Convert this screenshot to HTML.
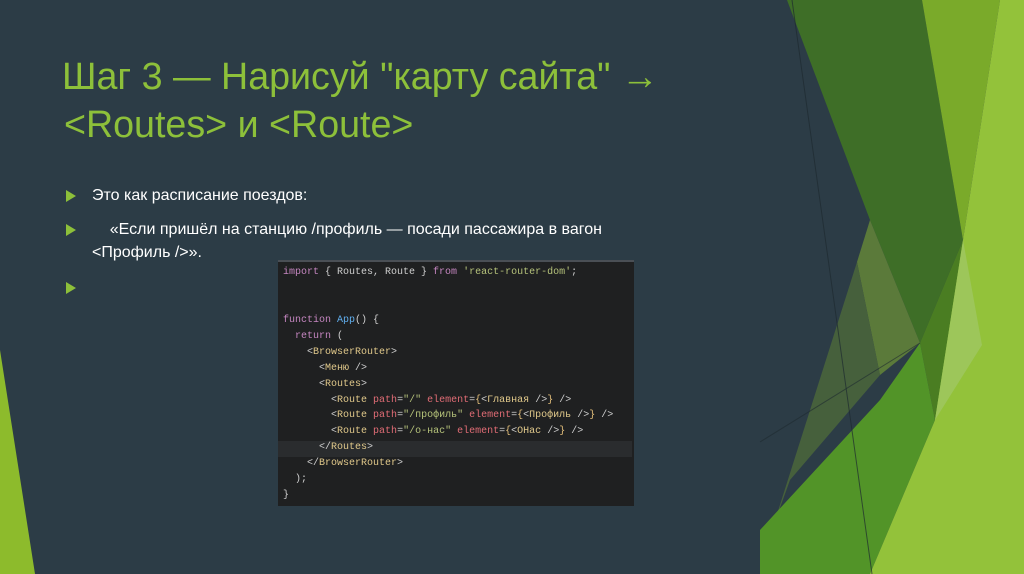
<!DOCTYPE html>
<html><head><meta charset="utf-8"><style>
html,body{margin:0;padding:0}
body{width:1024px;height:574px;background:#2c3c46;position:relative;overflow:hidden;font-family:"Liberation Sans",sans-serif}
svg.bg{position:absolute;left:0;top:0}
.title{position:absolute;left:62px;color:#8dc03a;font-size:38px;white-space:nowrap;transform-origin:0 0;transform:scaleX(0.99);line-height:1}
.b{position:absolute;color:#fff;font-size:16px;white-space:nowrap}
.tri{position:absolute;left:66px;width:0;height:0;border-left:10px solid #8dc03a;border-top:6px solid transparent;border-bottom:6px solid transparent}
.code{position:absolute;left:278px;top:260px;width:356px;height:246px;background:#1f2021;border-top:2px solid #4a4f55;box-sizing:border-box}
.code pre{margin:0;position:absolute;left:5px;top:3px;font-family:"Liberation Mono",monospace;font-size:10px;line-height:15.93px;color:#cfcfcf}
.hl{position:absolute;left:0;top:179px;width:354px;height:16px;background:#2a2c2e}
.k{color:#c586c0}.s{color:#b5c27a}.f{color:#61afef}.t{color:#e0c88a}.a{color:#e06c75}.y{color:#e5c07b}
</style></head><body>
<svg class="bg" width="1024" height="574">
<polygon points="0,350 35,574 0,574" fill="#8dbb2c"/>
<polygon points="787,0 922,0 963,240 920,343 870,220" fill="#3e6e27"/>
<polygon points="922,0 1000,0 963,240" fill="#7aaa2a"/>
<polygon points="870,220 920,343 880,375 857,262" fill="#5b7a3a"/>
<polygon points="920,343 963,240 945,380 935,420" fill="#4a7d22"/>
<polygon points="857,262 880,375 790,480 772,530" fill="#46603c"/>
<polygon points="760,574 760,530 880,400 920,343 935,420 870,574" fill="#529428"/>
<polygon points="1000,0 1024,0 1024,574 870,574 935,420 963,240" fill="#93c23a"/>
<polygon points="963,240 982,345 935,420" fill="#9dc65a"/>
<line x1="792" y1="0" x2="872" y2="574" stroke="#1e2a30" stroke-width="1" opacity=".7"/>
<line x1="760" y1="442" x2="920" y2="343" stroke="#1e2a30" stroke-width="1" opacity=".6"/>
</svg>
<div class="title" style="top:58px">Шаг 3 — Нарисуй "карту сайта" →</div>
<div class="title" style="top:106px;left:64px">&lt;Routes&gt; и &lt;Route&gt;</div>
<div class="tri" style="top:190px"></div>
<div class="b" style="left:92px;top:187px">Это как расписание поездов:</div>
<div class="tri" style="top:224px"></div>
<div class="b" style="left:92px;top:221px">&nbsp;&nbsp;&nbsp;&nbsp;«Если пришёл на станцию /профиль — посади пассажира в вагон</div>
<div class="b" style="left:92px;top:244px">&lt;Профиль /&gt;».</div>
<div class="tri" style="top:282px"></div>
<div class="code"><div class="hl"></div><pre><span class="k">import</span> { Routes, Route } <span class="k">from</span> <span class="s">'react-router-dom'</span>;


<span class="k">function</span> <span class="f">App</span>() {
  <span class="k">return</span> (
    &lt;<span class="t">BrowserRouter</span>&gt;
      &lt;<span class="t">Меню</span> /&gt;
      &lt;<span class="t">Routes</span>&gt;
        &lt;<span class="t">Route</span> <span class="a">path</span>=<span class="s">"/"</span> <span class="a">element</span>=<span class="y">{</span>&lt;<span class="t">Главная</span> /&gt;<span class="y">}</span> /&gt;
        &lt;<span class="t">Route</span> <span class="a">path</span>=<span class="s">"/профиль"</span> <span class="a">element</span>=<span class="y">{</span>&lt;<span class="t">Профиль</span> /&gt;<span class="y">}</span> /&gt;
        &lt;<span class="t">Route</span> <span class="a">path</span>=<span class="s">"/о-нас"</span> <span class="a">element</span>=<span class="y">{</span>&lt;<span class="t">ОНас</span> /&gt;<span class="y">}</span> /&gt;
      &lt;/<span class="t">Routes</span>&gt;
    &lt;/<span class="t">BrowserRouter</span>&gt;
  );
}</pre></div>
</body></html>
